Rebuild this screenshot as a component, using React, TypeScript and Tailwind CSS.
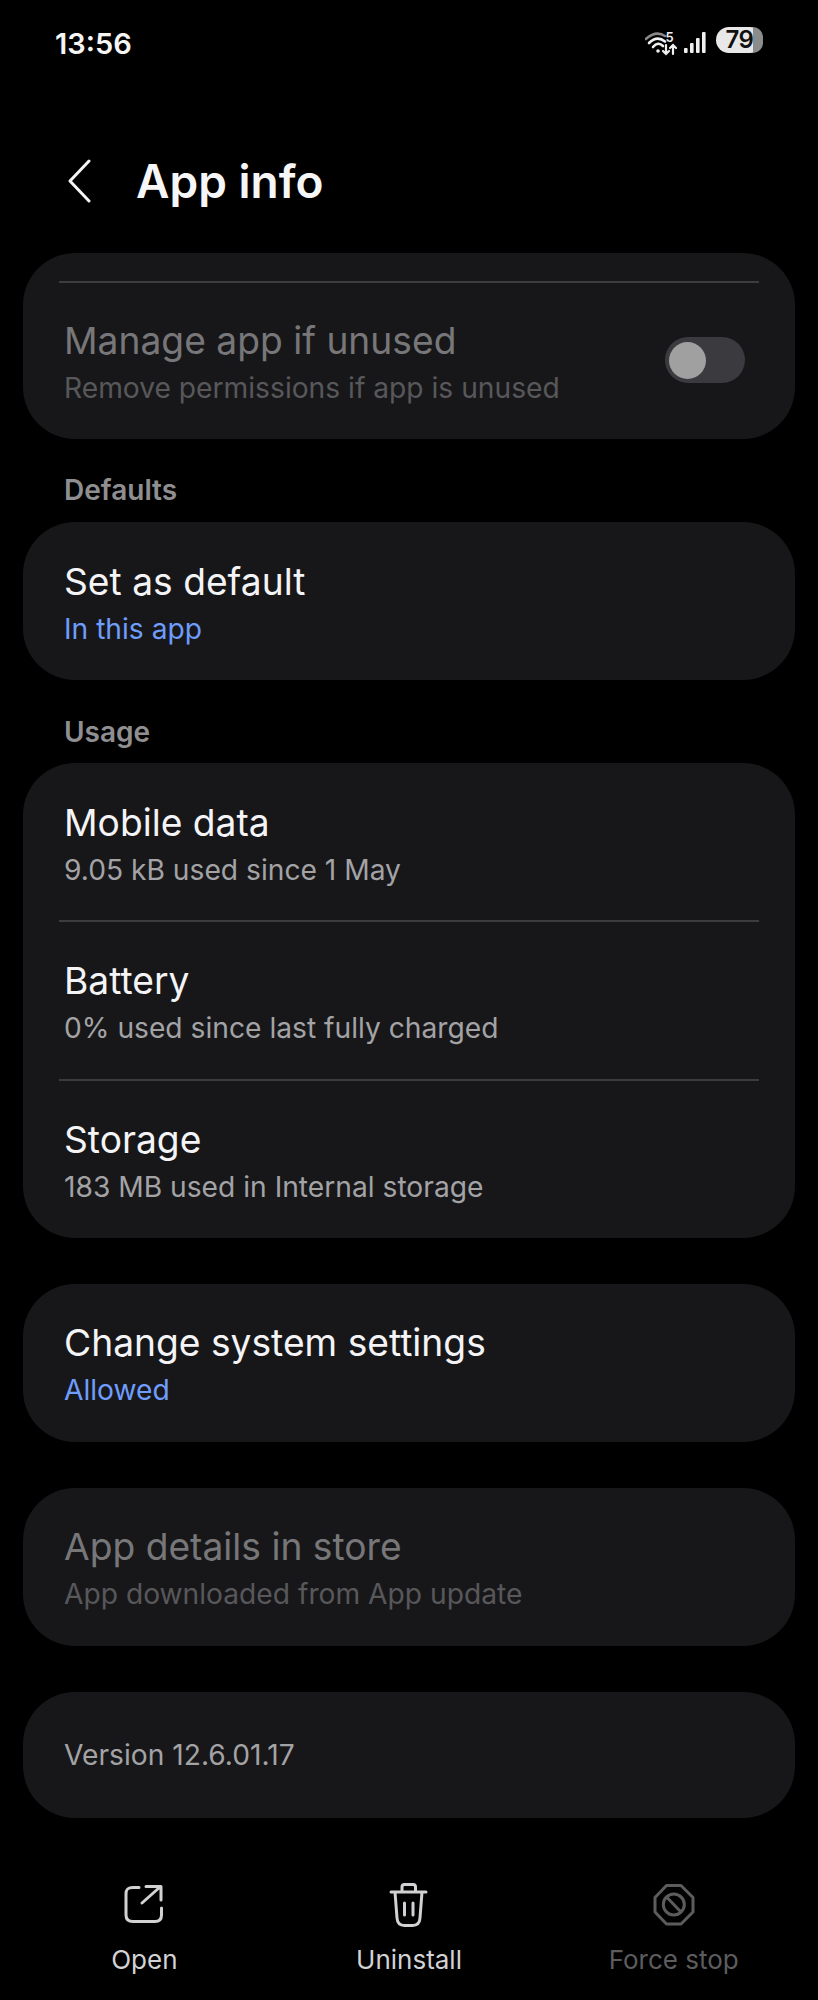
const font = { fontFamily: "Inter, 'Noto Sans', sans-serif" };

function Row({ title, sub, subClass = "text-[#a3a3a5]", titleClass = "text-[#f4f4f6]", h = "h-[158px]", pt = "pt-[36px]" }: { title: string; sub: string; subClass?: string; titleClass?: string; h?: string; pt?: string }) {
  return (
    <div className={`flex flex-col pl-[41px] ${pt} ${h}`}>
      <div className={`text-[37.2px] leading-[48px] ${titleClass}`}>{title}</div>
      <div className={`text-[28.2px] leading-[46px] ${subClass}`}>{sub}</div>
    </div>
  );
}

function Divider() {
  return <div className="mx-[36px] h-[2px] bg-[#3c3c3e]" />;
}

function Card({ children, className = "" }: { children: React.ReactNode; className?: string }) {
  return <div className={`mx-[23px] rounded-[52px] bg-[#17171a] ${className}`}>{children}</div>;
}

function Label({ text, className = "" }: { text: string; className?: string }) {
  return <div className={`pl-[64px] text-[28px] font-semibold leading-[34px] text-[#8f8f91] ${className}`}>{text}</div>;
}

function Action({ label, className, box, children }: { label: string; className: string; box: string; children: React.ReactNode }) {
  return (
    <div className={`flex w-[265px] flex-col items-center ${className}`}>
      <svg width="48" height="48" viewBox={box} fill="none" stroke="currentColor" strokeWidth="3" strokeLinecap="round" strokeLinejoin="round">
        {children}
      </svg>
      <div className="mt-[13px] text-[26px] leading-[36px]">{label}</div>
    </div>
  );
}

export default function App() {
  return (
    <div style={font} className="h-[2000px] w-[818px] bg-black">
      <div className="flex h-[86px] items-start justify-between pl-[55px] pr-[55px] pt-[26px]">
        <div className="text-[29px] font-semibold leading-[36px] text-[#f6f6f6]">13:56</div>
        <div className="flex items-start">
          <svg width="34" height="26" viewBox="0 0 34 26" fill="none" strokeLinecap="round" className="mt-[4px]">
            <path d="M0.8 9Q11 0 20 6" stroke="#8a8a8a" strokeWidth="2.6" />
            <path d="M4 13Q12 5 20 11.5" stroke="#f0f0f0" strokeWidth="2.6" />
            <path d="M8 17Q13 11 18 16" stroke="#f0f0f0" strokeWidth="2.6" />
            <circle cx="13" cy="21" r="1.8" fill="#f0f0f0" />
            <path d="M21 15V24M18 21L21 24L24 21M28 24V15M25 18L28 15L31 18" stroke="#f0f0f0" strokeWidth="2.2" />
            <text x="20.5" y="12" fontSize="13" fontWeight="600" fill="#f0f0f0" stroke="none" fontFamily="Inter, sans-serif">5</text>
          </svg>
          <svg width="22" height="22" viewBox="0 0 22 22" fill="#f0f0f0" className="ml-[5px] mt-[6px]">
            <rect x="0" y="16" width="3.6" height="5" rx="1" />
            <rect x="6" y="11" width="3.6" height="10" rx="1" />
            <rect x="12" y="6" width="3.6" height="15" rx="1" />
            <rect x="18" y="0" width="3.6" height="21" rx="1" />
          </svg>
          <div className="relative ml-[10px] mt-[1px] flex h-[26px] w-[47px] items-center justify-center rounded-full bg-[#e8e8e8]">
            <div className="absolute bottom-0 right-0 top-0 w-[10px] rounded-r-full bg-[#8c8c8c]" />
            <span className="relative text-[24px] font-semibold leading-[26px] tracking-[-0.5px] text-[#111]">79</span>
          </div>
        </div>
      </div>

      <div className="flex h-[167px] items-start pl-[68px] pt-[70px]">
        <svg width="24" height="44" viewBox="0 0 24 44" fill="none" stroke="#f4f4f6" strokeWidth="3" strokeLinecap="round" strokeLinejoin="round" className="mt-[3px]">
          <path d="M21 2L2 22L21 42" />
        </svg>
        <div className="ml-[44px] text-[46px] font-semibold leading-[50px] text-[#f6f6f8]">App info</div>
      </div>

      <Card className="h-[186px] pt-[28px]">
        <div className="mx-[36px] h-[2px] bg-[#3c3c3e]" />
        <div className="flex h-[156px] items-center justify-between pr-[50px]">
          <div className="flex flex-col pl-[41px] pt-[6px]">
            <div className="text-[37.2px] leading-[48px] text-[#777779]">Manage app if unused</div>
            <div className="text-[28.2px] leading-[46px] text-[#58585a]">Remove permissions if app is unused</div>
          </div>
          <div className="mb-[2px] flex h-[46px] w-[80px] items-center rounded-full bg-[#3b3b3f] pl-[4px]">
            <div className="h-[37px] w-[37px] rounded-full bg-[#a0a0a0]" />
          </div>
        </div>
      </Card>

      <Label text="Defaults" className="mt-[34px]" />
      <Card className="mt-[15px]">
        <Row title="Set as default" sub="In this app" subClass="text-[#6f9dfb]" />
      </Card>

      <Label text="Usage" className="mt-[35px]" />
      <Card className="mt-[14px]">
        <Row h="h-[157px]" title="Mobile data" sub="9.05 kB used since 1 May" />
        <Divider />
        <Row h="h-[157px]" pt="pt-[35px]" title="Battery" sub="0% used since last fully charged" />
        <Divider />
        <Row h="h-[157px]" pt="pt-[35px]" title="Storage" sub="183 MB used in Internal storage" />
      </Card>

      <Card className="mt-[46px]">
        <Row pt="pt-[35px]" title="Change system settings" sub="Allowed" subClass="text-[#6f9dfb]" />
      </Card>

      <Card className="mt-[46px]">
        <Row pt="pt-[35px]" title="App details in store" sub="App downloaded from App update" titleClass="text-[#777779]" subClass="text-[#58585a]" />
      </Card>

      <Card className="mt-[46px] flex h-[126px] items-center pl-[41px]">
        <div className="text-[28.2px] text-[#a3a3a5]">Version 12.6.01.17</div>
      </Card>

      <div className="mt-[63px] flex px-[12px]">
        <Action label="Open" className="text-[#d2d2d4]" box="11 11 48 48">
          <path d="M30 17.5H24C18.5 17.5 17 19.5 17 24V45C17 49.5 19 51.5 24 51.5H46C50.5 51.5 52.5 49.5 52.5 45V38" />
          <path d="M33 33L51 17M37 16.5H52V30" />
        </Action>
        <Action label="Uninstall" className="text-[#d2d2d4]" box="10.5 11 48 48">
          <path d="M16.5 22H51.5M27.5 22V17Q27.5 14.5 30 14.5H38.5Q41 14.5 41 17V22M20.5 22L22.5 48Q23 55.5 30 55.5H38Q45 55.5 45.5 48L47.5 22M30 33V45M38.5 33V45" />
        </Action>
        <Action label="Force stop" className="text-[#5c5c5e]" box="10.5 11 48 48">
          <path d="M27 15.5H41.5L53.5 27.5V42L41.5 54H27L15.5 42V27.5Z" />
          <circle cx="34.3" cy="34.5" r="10.5" />
          <path d="M28 28L40.5 41" />
        </Action>
      </div>
    </div>
  );
}
